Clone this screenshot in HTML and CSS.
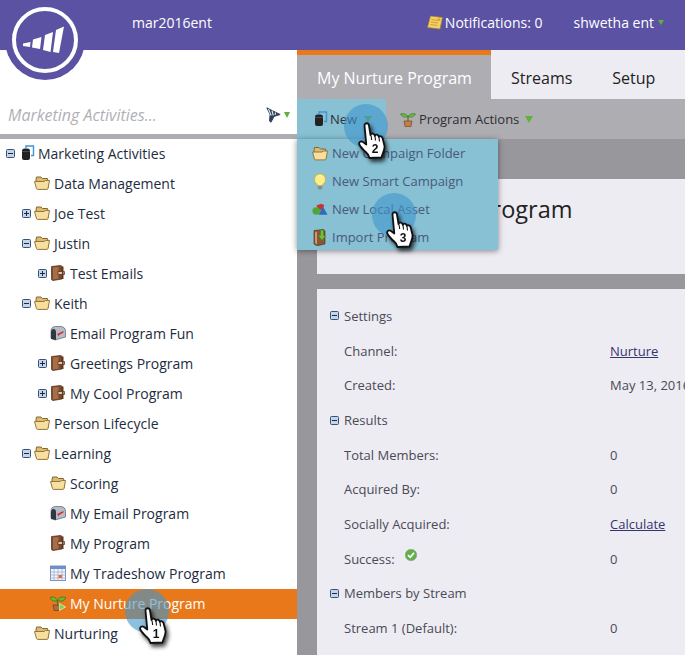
FILE: index.html
```html
<!DOCTYPE html>
<html lang="en">
    <head>
        <meta charset="UTF-8" />
        <title>My Nurture Program</title>
        <link rel="stylesheet" href="styles.css">
    </head>

    <body>
        <svg class="sprites" width="0" height="0">
            <symbol id="i-minus" viewBox="0 0 9 9">
                <rect x=".5" y=".5" width="8" height="8" rx="1" fill="#c6d4e6" stroke="#34527f"/>
                <path d="M2 4.5h5" stroke="#16294a"/>
            </symbol>
            <symbol id="i-plus" viewBox="0 0 9 9">
                <rect x=".5" y=".5" width="8" height="8" rx="1" fill="#c6d4e6" stroke="#34527f"/>
                <path d="M2 4.5h5M4.5 2v5" stroke="#16294a"/>
            </symbol>
            <symbol id="i-folder" viewBox="0 0 16 14">
                <path d="M2 4 2.500 1h4.500l1.500 1.500h5l.5 2.500V12H3z" fill="#d9bb72" stroke="#86672d"/>
                <path d="M.5 5.500H10l1.500-1h4l-1.500 8q-.2.9-1 .9H3.500q-.7 0-1-.8z" fill="#f7dfa0" stroke="#96763a"/>
            </symbol>
            <symbol id="i-book" viewBox="0 0 14 16">
                <path d="M5 3V1h7.500v9.500H10" fill="none" stroke="#3b95d8" stroke-width="1.400"/>
                <path d="M1 6q0-2.500 2.500-2.500h3Q9 3.500 9 6v7q0 2-2 2H3q-2 0-2-2z" fill="#222"/>
                <path d="M1 6.500h8" stroke="#555" stroke-width=".8"/>
            </symbol>
            <symbol id="i-program" viewBox="0 0 15 16">
                <path d="M1 1.500 10 .5q1.500 0 1.500 1.500V14l-9 1.500Q1 15 1 14z" fill="#7d4a2c" stroke="#4c2a18" stroke-width=".7"/>
                <path d="M2.500 2.500 8 1.800v12l-5.500.8z" fill="#a66f48"/>
                <path d="M7.500 6.500H14v3H7.500z" fill="#dcc7b0" stroke="#4c2a18" stroke-width=".7"/>
                <path d="M11.500 1.500H13V14h-1.500z" fill="#5f3820"/>
            </symbol>
            <symbol id="i-mailbox" viewBox="0 0 16 16">
                <path d="M1 13V6.500Q1 1.500 5.500 1.500H11q4.500.5 4.500 5V12L5 15z" fill="#b4bcc6" stroke="#56606c" stroke-width=".7"/>
                <path d="M1 14V7.500Q1 4 3.500 4T6 7.500V15z" fill="#2e3742"/>
                <path d="M7 9l6.500-3v1.500L9 10v1.500z" fill="#d8262a"/>
            </symbol>
            <symbol id="i-calendar" viewBox="0 0 16 16">
                <rect x=".5" y="1" width="15" height="14.500" fill="#f4f6fa" stroke="#7b92bd"/>
                <rect x=".5" y="1" width="15" height="3" fill="#6d8fd0"/>
                <path d="M.5 7h15M.5 10h15M.5 13h15M4 4v11M8 4v11M12 4v11" stroke="#9fb0cf" stroke-width=".8"/>
                <rect x="8.500" y="10" width="3.500" height="3" fill="#e8693a"/>
            </symbol>
            <symbol id="i-nurture" viewBox="0 0 16 16">
                <path d="M4 15.500h5l1-5.500H3z" fill="#b06c3e" stroke="#5d3519" stroke-width=".6"/>
                <path d="M7.500 10V5" stroke="#3e7d1e" stroke-width="1.200"/>
                <path d="M7.500 5.500Q5 .5 0 2.500 2 7.500 7.500 5.500zM7.500 5.500Q10 .5 16 2.500 13.500 7.500 7.500 5.500z" fill="#62ba35" stroke="#2f6a16" stroke-width=".6"/>
                <path d="M9.500 8.500l6 3.500-6 3.500z" fill="#7ed34a" stroke="#fff" stroke-width=".6"/>
            </symbol>
            <symbol id="i-plant" viewBox="0 0 16 16">
                <path d="M4 10h8l-1 5.500H5z" fill="#c67c44" stroke="#6c3e1c" stroke-width=".6"/>
                <path d="M8 10V5" stroke="#3e7d1e" stroke-width="1.200"/>
                <path d="M8 5.500Q5.500 1.500.5 3 3 7.500 8 5.500zM8 5.500Q10.500 1.500 15.500 3 13 7.500 8 5.500z" fill="#6cc23c" stroke="#2f6a16" stroke-width=".6"/>
            </symbol>
            <symbol id="i-bulb" viewBox="0 0 14 18">
                <path d="M7 .8a6 6 0 0 1 3.500 10.800q-.8.8-.8 1.900H4.300q0-1.100-.8-1.900A6 6 0 0 1 7 .8z" fill="#fbef8c" stroke="#c3a93a" stroke-width=".8"/>
                <path d="M4.500 13.500h5V16l-1 1.500h-3l-1-1.500z" fill="#8b8f96"/>
            </symbol>
            <symbol id="i-shapes" viewBox="0 0 17 13">
                <path d="M5 2 10 .5 13 2l-2 5H6z" fill="#d22f33"/>
                <path d="M11.500 3l5 9H7z" fill="#2f6cb5"/>
                <circle cx="4.500" cy="8" r="4" fill="#4ba838"/>
            </symbol>
            <symbol id="i-import" viewBox="0 0 14 17">
                <path d="M1 1.500 10.500.5 12 2v13l-8 1.800L1 15z" fill="#8a5535" stroke="#4c2a18" stroke-width=".6"/>
                <path d="M2 2.500l2 1v12l-2-1.500z" fill="#c79a72"/>
                <path d="M7.500 1h3v5.500h2.200L9 11.500 5.300 6.500h2.200z" fill="#6dc23a" stroke="#37801a" stroke-width=".5"/>
            </symbol>
            <symbol id="i-note" viewBox="0 0 16 15">
                <path d="M3.500 1l12 1.500L13 14 .5 12.500z" fill="#f4d162" stroke="#a8822a" stroke-width=".7"/>
                <path d="M4.500 4.500l7 1M4 7l7 1M3.500 9.500l7 1" stroke="#b08d35" stroke-width=".7"/>
                <circle cx="12" cy="4.500" r="1.500" fill="#e8a13a"/>
            </symbol>
            <symbol id="i-funnel" viewBox="0 0 15 16">
                <path d="M.8.800 14.200 7.500 8 9.500 5 15.300 3.500 14 4 7.500z" fill="#2f3f5c" stroke="#26344c" stroke-width=".8"/>
                <path d="M2.500 2 5.200 8.500M6 3.500 7.300 8.500M9.500 5.500l-.4 2.500" stroke="#e4e9f0" stroke-width="1.100"/>
            </symbol>
            <symbol id="i-check" viewBox="0 0 12 12">
                <circle cx="6" cy="6" r="5.800" fill="#62b04a" stroke="#8d958a" stroke-width=".5"/>
                <path d="M3 6.200l2.200 2.100L9 3.900" fill="none" stroke="#fff" stroke-width="1.700"/>
            </symbol>
            <symbol id="i-hand" viewBox="0 0 28 37">
                <path class="hand-shape" d="M6.500 3.500C6.500.5 10.500.5 11 3.500L12.500 13C13 10.800 16.500 11 16.800 13.800 17.300 12 20.500 12.300 20.800 15 21.500 13.500 24.500 14.200 24.800 17L26.500 24C27 28 24.500 31 23.500 35.500L11.500 36C11 33.500 9.500 31.500 7.500 29.800 5 27.500 2.500 25 1.300 22.500.5 20 3 18.500 5 20L8.300 22.500z"/>
                <path class="hand-lines" d="M13 13.500 13.700 18M17 14 17.500 18.500M21 15.500 21.500 19.500"/>
            </symbol>
        </svg>

        <div class="app">
            <header class="topbar">
                <span class="account">mar2016ent</span>
                <span class="notifs"><svg class="ic-note"><use href="#i-note"/></svg>Notifications: 0</span>
                <span class="user">shwetha ent<i class="tri"></i></span>
            </header>

            <div class="logo">
                <svg viewBox="0 0 80 80" width="80" height="80">
                    <circle cx="40" cy="40" r="40" fill="#5b52a3"/>
                    <circle cx="40" cy="40" r="31" fill="none" stroke="#fff" stroke-width="4"/>
                    <path d="M18 43.500 25.500 42 25 47 18 46z" fill="#fff"/>
                    <path d="M28 39.500 36.500 37 35 49 27 47.500z" fill="#fff"/>
                    <path d="M40 35 48 32 45.500 52 38 50z" fill="#fff"/>
                    <path d="M51 30 59 26.500 54 53 48 52z" fill="#fff"/>
                </svg>
            </div>

            <div class="columns">
                <aside class="sidebar">
                    <div class="search">
                        <span class="search-text">Marketing Activities...</span>
                        <svg class="ic-funnel"><use href="#i-funnel"/></svg>
                        <i class="tri"></i>
                    </div>
                    <ul class="tree">
                        <li class="root"><svg class="tog"><use href="#i-minus"/></svg><svg class="ic ic-root"><use href="#i-book"/></svg>Marketing Activities</li>
                        <li class="lv1 no-tog"><svg class="ic"><use href="#i-folder"/></svg>Data Management</li>
                        <li class="lv1"><svg class="tog"><use href="#i-plus"/></svg><svg class="ic"><use href="#i-folder"/></svg>Joe Test</li>
                        <li class="lv1"><svg class="tog"><use href="#i-minus"/></svg><svg class="ic"><use href="#i-folder"/></svg>Justin</li>
                        <li class="lv2"><svg class="tog"><use href="#i-plus"/></svg><svg class="ic"><use href="#i-program"/></svg>Test Emails</li>
                        <li class="lv1"><svg class="tog"><use href="#i-minus"/></svg><svg class="ic"><use href="#i-folder"/></svg>Keith</li>
                        <li class="lv2 no-tog"><svg class="ic"><use href="#i-mailbox"/></svg>Email Program Fun</li>
                        <li class="lv2"><svg class="tog"><use href="#i-plus"/></svg><svg class="ic"><use href="#i-program"/></svg>Greetings Program</li>
                        <li class="lv2"><svg class="tog"><use href="#i-plus"/></svg><svg class="ic"><use href="#i-program"/></svg>My Cool Program</li>
                        <li class="lv1 no-tog"><svg class="ic"><use href="#i-folder"/></svg>Person Lifecycle</li>
                        <li class="lv1"><svg class="tog"><use href="#i-minus"/></svg><svg class="ic"><use href="#i-folder"/></svg>Learning</li>
                        <li class="lv2 no-tog"><svg class="ic"><use href="#i-folder"/></svg>Scoring</li>
                        <li class="lv2 no-tog"><svg class="ic"><use href="#i-mailbox"/></svg>My Email Program</li>
                        <li class="lv2 no-tog"><svg class="ic"><use href="#i-program"/></svg>My Program</li>
                        <li class="lv2 no-tog"><svg class="ic"><use href="#i-calendar"/></svg>My Tradeshow Program</li>
                        <li class="lv2 no-tog selected"><svg class="ic"><use href="#i-nurture"/></svg>My Nurture Program</li>
                        <li class="lv1 no-tog"><svg class="ic"><use href="#i-folder"/></svg>Nurturing</li>
                    </ul>
                </aside>

                <main class="main">
                    <nav class="tabs">
                        <span class="tab active">My Nurture Program</span>
                        <span class="tab">Streams</span>
                        <span class="tab">Setup</span>
                    </nav>
                    <div class="toolbar">
                        <div class="tool tool-new"><svg class="ic-tool"><use href="#i-book"/></svg>New<i class="tri"></i></div>
                        <div class="tool tool-actions"><svg class="ic-plant"><use href="#i-plant"/></svg>Program Actions<i class="tri"></i></div>
                    </div>
                    <div class="dropdown">
                        <div class="drop-item"><svg class="ic-drop"><use href="#i-folder"/></svg>New Campaign Folder</div>
                        <div class="drop-item"><svg class="ic-drop"><use href="#i-bulb"/></svg>New Smart Campaign</div>
                        <div class="drop-item"><svg class="ic-drop"><use href="#i-shapes"/></svg>New Local Asset</div>
                        <div class="drop-item"><svg class="ic-drop"><use href="#i-import"/></svg>Import Program</div>
                    </div>
                    <div class="content">
                        <section class="panel panel-title">
                            <h1>My Nurture Program</h1>
                        </section>
                        <section class="panel panel-info">
                            <div class="sec"><svg class="tog"><use href="#i-minus"/></svg>Settings</div>
                            <div class="row"><span>Channel:</span><a>Nurture</a></div>
                            <div class="row"><span>Created:</span><span>May 13, 2016</span></div>
                            <div class="sec"><svg class="tog"><use href="#i-minus"/></svg>Results</div>
                            <div class="row"><span>Total Members:</span><span>0</span></div>
                            <div class="row"><span>Acquired By:</span><span>0</span></div>
                            <div class="row"><span>Socially Acquired:</span><a>Calculate</a></div>
                            <div class="row"><span>Success:<svg class="ic-check"><use href="#i-check"/></svg></span><span>0</span></div>
                            <div class="sec"><svg class="tog"><use href="#i-minus"/></svg>Members by Stream</div>
                            <div class="row"><span>Stream 1 (Default):</span><span>0</span></div>
                        </section>
                    </div>
                </main>
            </div>

            <div class="marker marker-1">
                <i class="spot"></i>
                <div class="hand"><svg><use href="#i-hand"/></svg><span class="hand-num">1</span></div>
            </div>
            <div class="marker marker-2">
                <i class="spot"></i>
                <div class="hand"><svg><use href="#i-hand"/></svg><span class="hand-num">2</span></div>
            </div>
            <div class="marker marker-3">
                <i class="spot"></i>
                <div class="hand"><svg><use href="#i-hand"/></svg><span class="hand-num">3</span></div>
            </div>
        </div>
    </body>
</html>
```

FILE: styles.css
```css
@charset "utf-8";

* {
    margin: 0;
    padding: 0;
    box-sizing: border-box;
}

body {
    overflow: hidden;
    font-family: "Open Sans", sans-serif;
    font-size: 13px;
}

.sprites {
    position: absolute;
}

.app {
    position: relative;
    width: 685px;
    height: 655px;
    overflow: hidden;
}

.tri {
    display: inline-block;
    width: 0;
    height: 0;
    border-left: 4px solid transparent;
    border-right: 4px solid transparent;
    border-top: 7px solid #5fb03c;
}

/* top bar */
.topbar {
    display: flex;
    align-items: center;
    height: 50px;
    padding: 0 21px 5px 132px;
    background-color: #5b52a3;
    color: white;
    font-size: 14px;
}

.account {
    margin-right: auto;
}

.notifs {
    display: flex;
    align-items: center;
    gap: 2px;
    margin-right: 31px;
}

.ic-note {
    width: 16px;
    height: 15px;
}

.user {
    display: flex;
    align-items: center;
    gap: 4px;
}

.user .tri {
    border-left-width: 3.5px;
    border-right-width: 3.5px;
    border-top-width: 5px;
}

.logo {
    position: absolute;
    left: 5px;
    top: 0;
    width: 80px;
    height: 80px;
}

.columns {
    display: flex;
    height: 605px;
}

/* left tree */
.sidebar {
    width: 297px;
    flex-shrink: 0;
    background-color: white;
}

.search {
    display: flex;
    align-items: center;
    height: 89px;
    padding: 46px 7px 0 8px;
    border-bottom: 5px solid #aeadb2;
    color: #b0afb6;
}

.search-text {
    margin-right: auto;
    font-size: 16px;
    font-style: italic;
}

.ic-funnel {
    width: 15px;
    height: 16px;
    margin-right: 3px;
}

.search .tri {
    border-top-width: 6px;
    border-left-width: 3.5px;
    border-right-width: 3.5px;
}

.tree {
    list-style: none;
}

.tree li {
    display: flex;
    align-items: center;
    height: 30px;
    padding-bottom: 2px;
    font-size: 14px;
    color: #1e2c40;
}

.tree .root {
    padding-left: 6px;
}

.tree .lv1 {
    padding-left: 22px;
}

.tree .lv2 {
    padding-left: 38px;
}

.tree .no-tog {
    padding-left: 34px;
}

.tree .lv2.no-tog {
    padding-left: 50px;
}

.tog {
    width: 9px;
    height: 9px;
    flex-shrink: 0;
}

.tree .tog {
    margin-right: 3px;
}

.ic {
    width: 16px;
    height: 16px;
    margin-right: 4px;
    flex-shrink: 0;
}

.tree .ic-root {
    width: 14px;
    margin-left: 3px;
    margin-right: 3px;
}

.tree .selected {
    background-color: #e8781a;
    color: white;
}

/* right side */
.main {
    position: relative;
    flex: 1;
    min-width: 0;
    background-color: #98979c;
}

.tabs {
    display: flex;
    height: 49px;
    background-color: #edecf3;
    font-size: 16px;
    color: #222;
}

.tab {
    display: flex;
    align-items: center;
    padding: 7px 20px 0;
}

.tab.active {
    width: 194px;
    padding-top: 2px;
    border-top: 5px solid #e8781a;
    background-color: #aeadb2;
    color: white;
    white-space: nowrap;
}

.toolbar {
    display: flex;
    height: 40px;
    background-color: #aeadb2;
    color: #2e2e33;
}

.tool {
    display: flex;
    align-items: center;
}

.tool-new {
    width: 89px;
    padding-left: 17px;
    background-color: #88c0d4;
}

.tool-new .tri {
    margin-left: 7px;
}

.tool-actions {
    margin-left: 14px;
}

.tool-actions .tri {
    margin-left: 6px;
}

.ic-tool {
    width: 14px;
    height: 16px;
    margin-right: 2px;
}

.ic-plant {
    width: 16px;
    height: 16px;
    margin-right: 3px;
}

.dropdown {
    position: absolute;
    left: 0;
    top: 89px;
    width: 201px;
    height: 111px;
    background-color: #88c0d4;
    box-shadow: 0 1px 6px rgba(0, 0, 0, 0.45);
    color: #48597c;
    z-index: 2;
}

.drop-item {
    display: flex;
    align-items: center;
    height: 28px;
    padding-left: 15px;
}

.ic-drop {
    width: 16px;
    height: 17px;
    margin-right: 4px;
}

.content {
    padding: 40px 0 0 20px;
}

.panel {
    background-color: #edecf3;
}

.panel-title {
    height: 95px;
    margin-bottom: 15px;
    padding: 14px 0 0 28px;
}

h1 {
    font-size: 23.5px;
    font-weight: 400;
    color: #222;
    white-space: nowrap;
}

.panel-info {
    height: 366px;
    padding-top: 9.6px;
    color: #4a4a55;
}

.sec {
    display: flex;
    align-items: center;
    gap: 5px;
    height: 34.7px;
    padding-left: 13px;
}

.row {
    display: grid;
    grid-template-columns: 266px auto;
    align-items: center;
    height: 34.7px;
    padding-left: 27px;
    white-space: nowrap;
}

.row a {
    color: #35356d;
    text-decoration: underline;
}

.ic-check {
    width: 12px;
    height: 12px;
    margin-left: 10px;
    transform: translateY(-3px);
}

/* numbered pointers */
.marker {
    position: absolute;
    width: 44px;
    height: 44px;
    z-index: 3;
}

.marker-1 {
    left: 125px;
    top: 589px;
}

.marker-2 {
    left: 344px;
    top: 104px;
}

.marker-3 {
    left: 372px;
    top: 193px;
}

.spot {
    display: block;
    width: 44px;
    height: 44px;
    border-radius: 50%;
    background-color: rgba(64, 150, 205, 0.6);
}

.hand {
    position: absolute;
    left: 14px;
    top: 18px;
    width: 28px;
    height: 37px;
    filter: drop-shadow(2px 3px 2px rgba(0, 0, 0, 0.75));
}

.hand svg {
    display: block;
    width: 28px;
    height: 37px;
    overflow: visible;
}

.hand-shape {
    fill: white;
    stroke: #111;
    stroke-width: 1.8;
    stroke-linejoin: round;
}

.hand-lines {
    fill: none;
    stroke: #111;
    stroke-width: 1.1;
}

.hand-num {
    position: absolute;
    left: 11px;
    top: 21px;
    width: 12px;
    font-family: "Liberation Sans", sans-serif;
    font-size: 12px;
    font-weight: 700;
    line-height: 13px;
    text-align: center;
    color: #111;
}
```
